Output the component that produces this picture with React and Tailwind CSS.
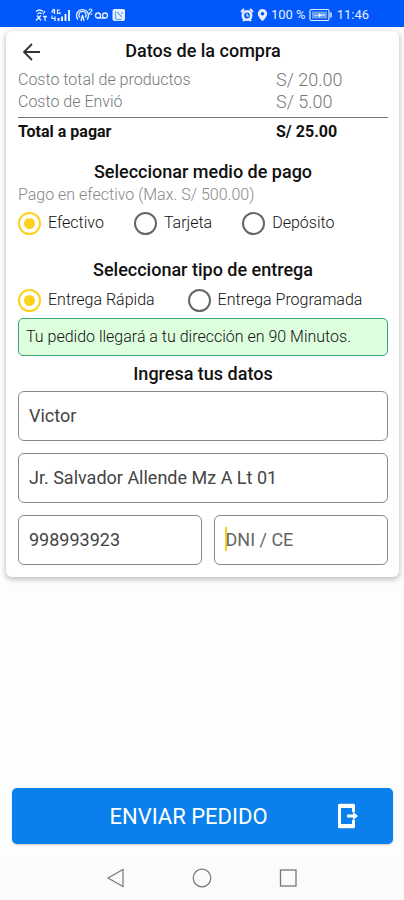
import React from "react";

const radioClass =
  "grid size-[23px] shrink-0 appearance-none place-content-center rounded-full border-2 border-[#666] bg-white before:size-[11px] before:rounded-full before:content-[''] checked:border-[#fbd21c] checked:before:bg-[#fbd21c]";

const fieldClass =
  "block h-[50px] w-full min-w-0 rounded-[6px] border border-[#8a8a8a] bg-white px-[10px] pb-[2px] text-[18px] text-[#444] outline-none placeholder:text-[#666] placeholder:opacity-100";

function Radio({ name, label, defaultChecked }) {
  return (
    <label className="flex items-center gap-[7px] whitespace-nowrap text-[16px] font-light leading-6 text-[#111]">
      <input type="radio" name={name} defaultChecked={defaultChecked} className={radioClass} />
      {label}
    </label>
  );
}

function Heading({ children }) {
  return <h2 className="text-center text-[18px] font-medium leading-6 text-[#111]">{children}</h2>;
}

function StatusBar() {
  return (
    <header className="flex h-[27px] items-center justify-between bg-[#0058fb] pl-[35px] pr-[35px] pt-[2px] text-[#e6efff]">
      <svg width="92" height="16" viewBox="0 0 92 16" fill="none" stroke="currentColor" strokeWidth="1.3" aria-hidden="true">
        <path d="M1 4.500c2-2 5-2 7 0M2.500 7c1.500-1.500 3-1.500 4 0M1 13.500l5-5M2 8.500l4 5M8 9.500h4M10 9.500V14M10 4l-2 3" />
        <path d="M18.500 2l-1.500 3h3M19.500 2v5M25 3h-2.500v3.500H25V5M17 8.500v3h3" strokeWidth="1.200" />
        <path d="M20 9.500V14" />
        <path d="M23.500 14v-3M27 14v-4.500M30.500 14V7M34 14V3" strokeWidth="2" />
        <path d="M43 12.500a6 6 0 1 1 9 0M45 10.500a3.600 3.600 0 1 1 5 0M46 14l1.500-6 1.500 6" />
        <path d="M54 3.500c0-2 3-2 3 0 0 1-3 2-3 3.500h3.500" strokeWidth="1.100" />
        <circle cx="63" cy="8.500" r="2.500" />
        <circle cx="70" cy="8.500" r="2.500" />
        <path d="M63 11h7" />
        <rect x="77.500" y="2" width="12.500" height="12" rx="2" fill="currentColor" stroke="none" />
        <path d="M80.500 4.500v6a2 2 0 0 0 2 2h4M82 5l5 5M87 5v2" stroke="#7ba7fb" />
      </svg>
      <div className="flex items-center gap-[3px] text-[13px] leading-4">
        <svg width="14" height="14" viewBox="0 0 14 14" fill="none" stroke="currentColor" aria-hidden="true">
          <circle cx="7" cy="7.500" r="4.200" strokeWidth="2.600" />
          <path d="M1 4l3-3M13 4l-3-3M3 13l1.500-1.500M11 13l-1.500-1.500" strokeWidth="2" />
          <path d="M7 5.500V8h2" strokeWidth="1.200" />
        </svg>
        <svg width="11" height="14" viewBox="0 0 11 14" fill="currentColor" aria-hidden="true">
          <path fillRule="evenodd" d="M5.500 1A4.700 4.700 0 0 0 .8 5.700C.8 9 5.500 13.200 5.500 13.200S10.200 9 10.200 5.700A4.700 4.700 0 0 0 5.500 1Zm0 3a1.800 1.800 0 1 1 0 3.600 1.800 1.800 0 0 1 0-3.600Z" />
        </svg>
        <span>100 %</span>
        <svg width="24" height="14" viewBox="0 0 24 14" fill="none" stroke="currentColor" aria-hidden="true">
          <rect x="1" y="1.500" width="19" height="11" rx="1.500" strokeWidth="1.200" />
          <rect x="3" y="3.500" width="15" height="7" fill="currentColor" stroke="none" opacity=".45" />
          <path d="M22 4.500v5" strokeWidth="1.500" />
          <path d="M5 7h4l2-2v1.500h5V7.500h-4l-2 2V7.500H5z" fill="white" stroke="none" />
        </svg>
        <span className="ml-px">11:46</span>
      </div>
    </header>
  );
}

export default function App() {
  return (
    <div className="flex min-h-screen flex-col bg-[#fdfdfd] font-['Roboto','Liberation_Sans',sans-serif]">
      <StatusBar />
      <main className="flex flex-1 flex-col">
        <form id="pedido" className="ml-[6px] mr-[5px] mt-1 rounded-[6px] bg-white pb-3 pl-3 pr-[11px] pt-2 shadow-[0_2px_5px_1px_rgba(0,0,0,0.22)]">
          <div className="grid grid-cols-[24px_1fr_24px] items-center">
            <button type="button" aria-label="Volver" className="text-[#333]">
              <svg width="24" height="24" viewBox="0 0 24 24" fill="none" stroke="currentColor" strokeWidth="1.800" aria-hidden="true">
                <path d="M22 13H6M14 5l-8 8 8 8" />
              </svg>
            </button>
            <h1 className="text-center text-[18px] font-medium leading-6 text-[#111]">Datos de la compra</h1>
          </div>

          <dl className="mt-[6px] grid grid-cols-[258px_1fr] font-light leading-[22px] text-[#777]">
            <dt className="text-[16px]">Costo total de productos</dt>
            <dd className="text-[18px]">S/ 20.00</dd>
            <dt className="text-[16px]">Costo de Envió</dt>
            <dd className="text-[18px]">S/ 5.00</dd>
          </dl>
          <dl className="mt-[4px] grid grid-cols-[258px_1fr] border-t border-[#777] pt-[2px] text-[16px] font-bold leading-6 text-[#111]">
            <dt>Total a pagar</dt>
            <dd>S/ 25.00</dd>
          </dl>

          <section className="mt-4">
            <Heading>Seleccionar medio de pago</Heading>
            <p className="text-[16px] font-light leading-[22px] text-[#888]">Pago en efectivo (Max. S/ 500.00)</p>
            <div className="mt-[5px] flex gap-[30px]">
              <Radio name="pago" label="Efectivo" defaultChecked />
              <Radio name="pago" label="Tarjeta" />
              <Radio name="pago" label="Depósito" />
            </div>
          </section>

          <section className="mt-[23px]">
            <Heading>Seleccionar tipo de entrega</Heading>
            <div className="mt-[6px] flex gap-[33px]">
              <Radio name="entrega" label="Entrega Rápida" defaultChecked />
              <Radio name="entrega" label="Entrega Programada" />
            </div>
            <p className="mt-[6px] rounded-[5px] border border-[#3fa578] bg-[#deffde] px-[7px] py-[6px] text-[16px] font-light leading-6 text-[#111]">
              Tu pedido llegará a tu dirección en 90 Minutos.
            </p>
          </section>

          <section className="mt-[6px]">
            <Heading>Ingresa tus datos</Heading>
            <div className="mt-[5px] grid grid-cols-[185fr_174fr] gap-x-3 gap-y-3">
              <input aria-label="Nombre" defaultValue="Victor" className={"col-span-2 " + fieldClass} />
              <input aria-label="Dirección" defaultValue="Jr. Salvador Allende Mz A Lt 01" className={"col-span-2 " + fieldClass} />
              <input aria-label="Teléfono" type="tel" defaultValue="998993923" className={fieldClass} />
              <div className="relative">
                <input aria-label="DNI / CE" placeholder="DNI / CE" className={fieldClass} />
                <span className="absolute left-[11px] top-3 h-6 w-[2px] bg-[#f5cf1d]" />
              </div>
            </div>
          </section>
        </form>

        <div className="mt-auto pb-3 pl-3 pr-[11px]">
          <button type="submit" form="pedido" className="grid h-14 w-full grid-cols-[1fr_44px] items-center rounded-[5px] bg-[#0b7feb] pl-[42px] pr-[34px] text-[22px] text-white shadow-[0_1px_2px_rgba(0,0,0,0.2)]">
            <span className="pl-2 text-center">ENVIAR PEDIDO</span>
            <svg className="justify-self-end" width="24" height="28" viewBox="0 0 24 28" fill="none" stroke="currentColor" aria-hidden="true">
              <path d="M18.500 10V4.500H4.500v19h14V18" strokeWidth="3" />
              <path d="M4.500 1.800h14a1.500 1.500 0 0 1 1.500 1.500V6H3V3.300a1.500 1.500 0 0 1 1.500-1.500ZM3 22h17v2.700a1.500 1.500 0 0 1-1.500 1.500h-14A1.500 1.500 0 0 1 3 24.700z" fill="currentColor" stroke="none" />
              <path d="M12 12.600h6V9.800l5 4.200-5 4.200v-2.800h-6z" fill="currentColor" stroke="none" />
            </svg>
          </button>
        </div>
      </main>

      <nav className="flex h-11 items-center justify-center gap-[66px] bg-[#fbfbfb] text-[#777]">
        <button type="button" aria-label="Atrás">
          <svg width="20" height="20" viewBox="0 0 20 20" fill="none" stroke="currentColor" strokeWidth="1.200" aria-hidden="true">
            <path d="M17 1.500v17L2 10z" />
          </svg>
        </button>
        <button type="button" aria-label="Inicio">
          <svg width="20" height="20" viewBox="0 0 20 20" fill="none" stroke="currentColor" strokeWidth="1.200" aria-hidden="true">
            <circle cx="10" cy="10" r="8.800" />
          </svg>
        </button>
        <button type="button" aria-label="Recientes">
          <svg width="20" height="20" viewBox="0 0 20 20" fill="none" stroke="currentColor" strokeWidth="1.300" aria-hidden="true">
            <rect x="2.500" y="2" width="15.500" height="16" />
          </svg>
        </button>
      </nav>
    </div>
  );
}
